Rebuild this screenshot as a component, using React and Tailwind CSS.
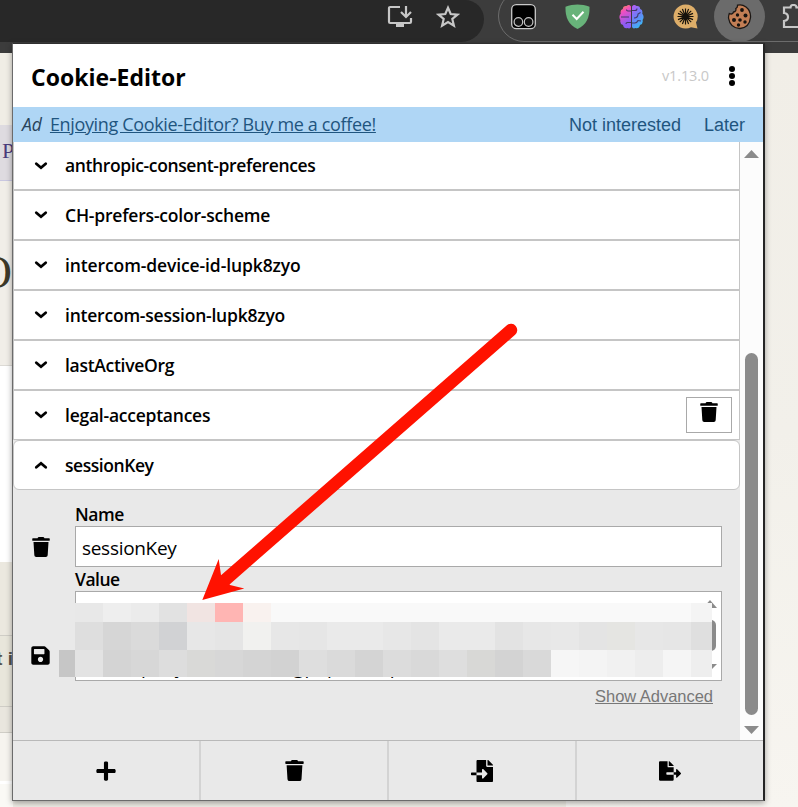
import React from 'react';
import { FaTrash, FaSave, FaPlus, FaFileImport, FaFileExport } from 'react-icons/fa';

const cookies = [
  { name: 'CH-prefers-color-scheme', tracking: 'tracking-[-0.2px]' },
  { name: 'intercom-device-id-lupk8zyo', tracking: 'tracking-[-0.11px]' },
  { name: 'intercom-session-lupk8zyo', tracking: 'tracking-[-0.22px]' },
  { name: 'lastActiveOrg', tracking: 'tracking-[-0.3px]' },
];

const maskTop = ['#e8e8e8', '#eeeeee', '#ebebeb', '#e2e2e2', '#f1e4e2', '#ffb5b3', '#f9f2ef', '#f9f9f9', '#f9f9f9', '#f9f9f9', '#f9f9f9', '#f9f9f9', '#f9f9f9', '#f9f9f9', '#f9f9f9', '#f9f9f9', '#f9f9f9', '#f9f9f9', '#f9f9f9', '#f9f9f9', '#f9f9f9', '#f9f9f9', '#f4f4f4'];
const maskMiddle = ['#dedede', '#d6d6d6', '#dadada', '#d1d2d4', '#e7e7e7', '#e5e5e5', '#f1f1ef', '#e7e7e7', '#e6e6e6', '#eaeaea', '#eaeaea', '#e7e7e7', '#e4e4e4', '#eaeaea', '#eaeaea', '#e3e3e3', '#e7e7e7', '#e8e8e8', '#e4e4e4', '#e5e5e2', '#e7e7e7', '#e6e6e6', '#dfdfdf'];
const maskBottom = ['#e3e3e3', '#d4d4d4', '#d7d7d7', '#dddddd', '#d9d9d7', '#d7d7d7', '#d4d4d4', '#d2d2d2', '#dedede', '#dadada', '#d4d4d4', '#dcdcdc', '#d9d9d9', '#dedede', '#d8d8d6', '#d3d3d3', '#d9d9d9', '#f6f6f6', '#f4f4f4', '#f1f1f1', '#ededed', '#f5f5f5', '#eeeeee'];

const MaskRow = ({ colors, height }) => (
  <div className="flex" style={{ height }}>
    {colors.map((color, i) => (
      <div key={i} className="w-7 shrink-0 last:w-[21px]" style={{ backgroundColor: color }} />
    ))}
  </div>
);

const Chevron = ({ up }) => (
  <svg className={up ? 'rotate-180' : ''} width="14" height="12" viewBox="0 0 14 12" fill="none" stroke="#000" strokeWidth="2.8">
    <path d="M2.300 3.700L7 7.700L11.700 3.700" strokeLinecap="round" />
  </svg>
);

const Toolbar = () => (
  <div className="flex h-[53px] bg-[#3c3c3c]">
    <div className="flex h-[42px] w-[484px] shrink-0 items-start gap-[23px] rounded-br-[24px] rounded-tr-[20px] bg-[#282828] pl-[387px] pt-[4px]">
      <svg width="26" height="25" viewBox="0 0 26 25" fill="none" stroke="#c7c7c7" strokeWidth="2.200">
        <path d="M13 3H3.200Q2 3 2 4.200V17.800Q2 19 3.200 19H22.800Q24 19 24 17.800V14" />
        <path d="M19 2V12.500M14 8L19 13L24 8" />
        <path d="M9 20H17V23H9Z" fill="#c7c7c7" stroke="none" />
      </svg>
      <svg width="24" height="25" viewBox="0 0 24 25" fill="none" stroke="#c7c7c7" strokeWidth="2.200">
        <path d="M12 3.800L14.700 10L21.500 10.600L16.300 15L17.900 21.600L12 18.100L6.100 21.600L7.700 15L2.500 10.600L9.300 10Z" />
      </svg>
    </div>
    <div className="-mt-[10px] ml-[14px] h-[52px] w-[320px] shrink-0 rounded-l-[26px] border border-[#6c6c6c] pl-3 pt-[13px]">
      <div className="flex items-start">
        <svg width="25" height="26" viewBox="0 0 25 26">
          <rect x="0.700" y="0.700" width="23.600" height="24" rx="4.500" fill="#000" stroke="#c9c9c9" strokeWidth="1.300" />
          <circle cx="7.400" cy="18" r="4.300" fill="#111" stroke="#c4c4c4" strokeWidth="1.200" />
          <circle cx="17.600" cy="18" r="4.300" fill="#111" stroke="#c4c4c4" strokeWidth="1.200" />
        </svg>
        <svg className="ml-[29px]" width="25" height="26" viewBox="0 0 25 26">
          <path d="M12.500 0.500C16 0.500 21 1.300 24.500 2.800C24.800 14 21.500 20.500 12.500 25C3.500 20.500 0.200 14 0.500 2.800C4 1.300 9 0.500 12.500 0.500Z" fill="#68b37a" />
          <path d="M7.500 10.800L11.700 15L18.500 7.800" fill="none" stroke="#fff" strokeWidth="2" />
        </svg>
        <svg className="ml-[29px]" width="25" height="26" viewBox="0 0 25 26">
          <defs>
            <linearGradient id="brainLeft" x1="0" y1="0" x2="0.300" y2="1">
              <stop offset="0.050" stopColor="#ff8a4c" />
              <stop offset="0.350" stopColor="#f04fc0" />
              <stop offset="0.900" stopColor="#8b5cf6" />
            </linearGradient>
            <linearGradient id="brainRight" x1="0" y1="0" x2="0.500" y2="1">
              <stop offset="0" stopColor="#b95cf5" />
              <stop offset="0.500" stopColor="#6f7cf8" />
              <stop offset="1" stopColor="#3db5f5" />
            </linearGradient>
          </defs>
          <path d="M12 2.500Q10 0 7.500 2Q4 1.500 3.800 5Q0.800 6 1.800 9.500Q-0.800 12.500 1.400 16Q0.600 20 4 21Q5 25 8.500 24Q11 25.200 12 23Z" fill="url(#brainLeft)" />
          <path d="M13 2.500Q15 0 17.500 2Q21 1.500 21.200 5Q24.200 6 23.200 9.500Q25.800 12.500 23.600 16Q24.400 20 21 21Q20 25 16.500 24Q14 25.200 13 23Z" fill="url(#brainRight)" />
          <path d="M12 7H9Q7.500 7 7.500 5.500M2 13H10M12 18.500H8.500Q7 18.500 7 20M13 6.500H16Q18 6.500 18 4.500M15 14Q19 14 19 10L21.500 8.500M13 19H16Q18 19 19 16.500L22 17" fill="none" stroke="#45386a" strokeWidth="1.100" />
        </svg>
        <svg className="ml-[29px]" width="25" height="26" viewBox="0 0 25 26">
          <path d="M12.500 0.500A12 12 0 0 1 23 18.500L24.500 24.500L18 23.200A12 12 0 1 1 12.500 0.500Z" fill="#deae69" />
          <path d="M12.500 4.500V20.500M4.500 12.500H20.500M6.800 6.800L18.200 18.200M18.200 6.800L6.800 18.200M9.400 5L15.600 20M15.600 5L9.400 20M5 9.400L20 15.600M5 15.600L20 9.400" stroke="#17130c" strokeWidth="1.200" />
        </svg>
        <div className="-mt-[13px] ml-[16px] flex h-[51px] w-[51px] items-center justify-center rounded-full bg-[#6b6b6b]">
          <svg width="25" height="26" viewBox="0 0 25 26">
            <path d="M10.500 1.200Q15 0 19 3Q24 7 23.500 13.500Q22.500 23.500 13 24.500Q3 24 1.500 14Q1.500 11.500 2.300 9.500Q5.500 11 6.500 8Q9.500 7.500 8.800 4.500Q10.800 3.500 10.500 1.200Z" fill="#c27e55" stroke="#1c1714" strokeWidth="1.300" />
            <g fill="#171310">
              <circle cx="15" cy="6" r="1.900" />
              <circle cx="10.500" cy="11" r="1.700" />
              <circle cx="18.500" cy="11.500" r="2" />
              <circle cx="7" cy="16" r="2" />
              <circle cx="13" cy="16" r="1.800" />
              <circle cx="18" cy="18" r="1.700" />
              <circle cx="11.500" cy="21" r="1.700" />
            </g>
          </svg>
        </div>
        <svg className="ml-[17px]" width="26" height="26" viewBox="0 0 26 26" fill="none" stroke="#c7c7c7" strokeWidth="2.200">
          <path d="M2 3.500H8.500Q8.500 1 11.500 1T14.500 3.500H22V23H2V17Q6 16.500 6 13T2 9Z" />
        </svg>
      </div>
    </div>
  </div>
);

// The part of the page that stays visible round the popup
const PageBehind = () => (
  <div className="flex h-[754px] overflow-hidden bg-[#f2efe8]">
    <div className="w-[13px] shrink-0 overflow-hidden font-['Liberation_Serif']">
      <div className="h-[72px] bg-[#f0ede5]" />
      <div className="h-[56px] overflow-hidden border-b border-[#c9c7e0] bg-[#dedbe0] pl-[2px] pt-[11px] text-[22px] leading-[30px] text-[#4a3c7c]">P</div>
      <div className="flex h-[185px] justify-end overflow-hidden border-b border-[#dcdad5] bg-[#f1eee8] pr-[1px] pt-[57px] text-[46px] leading-[70px] text-[#3d3929]">O</div>
      <div className="h-[196px] bg-white" />
      <div className="h-[74px] border-b border-[#cfcdc6] bg-[#ebe8df]" />
      <div className="flex h-[71px] items-start justify-end overflow-hidden whitespace-nowrap border-b border-[#cfcdc6] bg-[#e8e6db] pt-[10px] font-['Liberation_Sans'] text-[19px] font-bold leading-[26px] text-[#55524a]">t&nbsp;i</div>
      <div className="h-[26px] border-b border-[#cfcdc6] bg-[#e9e6de]" />
      <div className="h-[48px] bg-[#f6f4ef]" />
      <div className="h-[3px] bg-white" />
      <div className="h-[23px] bg-[#faf9f5]" />
    </div>
    <div className="w-[557px] shrink-0 border-r-4 border-[#f8f7f5] bg-[#efede6]" />
    <div className="grow bg-gradient-to-b from-[#f1eee7] via-[#f2f0ea] to-[#f7f5f0]" />
  </div>
);

const CookieRow = ({ name, tracking, className = '', children }) => (
  <div className={`flex h-[50px] items-center border border-[#c5c5c5] bg-white pl-[20px] pr-[7px] ${className}`}>
    <Chevron />
    <span className={`ml-[17px] grow text-[17.5px] font-semibold ${tracking}`}>{name}</span>
    {children}
  </div>
);

const SelectedCookie = () => (
  <div className="h-[250px] bg-[#e9e9e9]">
    <div className="flex">
      <div className="flex w-[62px] flex-col items-center pt-[47px]">
        <FaTrash className="-ml-1.5 h-5 w-[18px]" />
        <FaSave className="-ml-[7px] mt-[88px] h-[21px] w-[19px]" />
      </div>
      <div className="w-[647px] pt-[12px]">
        <label className="block h-[24px] text-[17.5px] font-semibold leading-[24px] tracking-[-0.4px]">Name</label>
        <div className="flex h-[41px] items-center border border-[#a9a9a9] bg-white px-[6px] pt-[3px] text-[19px] tracking-[-0.3px]">sessionKey</div>
        <label className="block h-[24px] text-[17.5px] font-semibold leading-[24px] tracking-[-0.5px]">Value</label>
        <div className="relative h-[90px] border border-[#a9a9a9] bg-white">
          <div className="flex h-full items-end overflow-hidden pl-[65px] text-[19px] leading-[25px]">
            <span>p</span>
            <span className="ml-[22px]">y</span>
            <span className="ml-[109px]">g</span>
            <span className="ml-[1px]">p</span>
            <span className="ml-[11px]">p</span>
            <span className="ml-[51px]">p</span>
          </div>
          <svg className="absolute right-[2px] top-[4px]" width="16" height="78" viewBox="0 0 16 78" fill="#8b8b8b">
            <path d="M0 12L7 4L14 12Z" />
            <rect x="2" y="24" width="11" height="31" rx="5" />
            <path d="M0 68H14L7 75Z" />
          </svg>
          <div className="absolute -left-px top-[11px] w-[637px]">
            <MaskRow colors={maskTop} height={19} />
            <MaskRow colors={maskMiddle} height={28} />
            <MaskRow colors={maskBottom} height={27} />
            <div className="absolute -left-4 bottom-0 h-[27px] w-4 bg-[#c6c6c6]" />
          </div>
        </div>
        <div className="mr-[9px] mt-[4px] text-right font-['Liberation_Sans'] text-[16.5px] leading-[22px] tracking-[-0.03px] text-[#777] underline">Show Advanced</div>
      </div>
    </div>
  </div>
);

const footerButtons = [
  { id: 'add', icon: <FaPlus className="h-[22px] w-[20px]" /> },
  { id: 'delete', icon: <FaTrash className="h-[21px] w-[19px]" /> },
  { id: 'import', icon: <FaFileImport className="h-[22px] w-[22px]" /> },
  { id: 'export', icon: <FaFileExport className="h-[22px] w-[22px]" /> },
];

const App = () => {
  return (
    <div className="relative h-[807px] w-[798px] overflow-hidden font-['Open_Sans',sans-serif] text-black">
      <Toolbar />
      <PageBehind />

      <div className="absolute left-[12px] top-[43px] flex h-[758px] w-[753px] flex-col border border-r-2 border-[#6b6b6b] border-r-[#252525] border-t-[#303030] bg-white shadow-[0_2px_6px_rgba(0,0,0,0.35)]">
        <header className="flex h-[63px] shrink-0 items-center pl-[18px] pr-[27px]">
          <h1 className="grow pt-[4px] text-[23px] font-bold tracking-[0.02px]">Cookie-Editor</h1>
          <span className="text-[14.5px] tracking-[-0.15px] text-[#c8c8c8]">v1.13.0</span>
          <svg className="ml-[19px]" width="8" height="22" viewBox="0 0 8 22">
            <circle cx="4" cy="4" r="3" />
            <circle cx="4" cy="11" r="3" />
            <circle cx="4" cy="18" r="3" />
          </svg>
        </header>

        <div className="flex h-[35px] shrink-0 items-center bg-[#afd6f5] pl-[9px] pr-[18px] text-[#1f557f]">
          <span className="text-[17.5px] italic text-[#28435a]">Ad</span>
          <a className="ml-[8px] grow text-[18px] tracking-[-0.35px] underline">Enjoying Cookie-Editor? Buy me a coffee!</a>
          <span className="pt-px font-['Liberation_Sans'] text-[18px]">Not interested</span>
          <span className="ml-[23px] pt-px font-['Liberation_Sans'] text-[18px]">Later</span>
        </div>

        <div className="flex h-[598px] shrink-0">
          <div className="w-[727px] bg-[#e9e9e9]">
            <CookieRow name="anthropic-consent-preferences" tracking="tracking-[-0.38px]" className="h-[48px]! border-t-0" />
            {cookies.map((cookie) => (
              <CookieRow key={cookie.name} name={cookie.name} tracking={cookie.tracking} />
            ))}
            <CookieRow name="legal-acceptances" tracking="tracking-[-0.24px]">
              <div className="flex h-[36px] w-[46px] justify-center border border-[#a9a9a9] pt-[4px]">
                <FaTrash className="h-5 w-[18px]" />
              </div>
            </CookieRow>
            <div className="flex h-[50px] items-center rounded-md border border-[#c5c5c5] bg-white pl-[20px]">
              <Chevron up />
              <span className="ml-[17px] text-[17.5px] font-semibold tracking-[-0.45px]">sessionKey</span>
            </div>
            <SelectedCookie />
          </div>
          <div className="flex w-[23px] flex-col items-center bg-[#fcfcfc] pt-[8px]">
            <svg width="15" height="8" viewBox="0 0 15 8" fill="#8b8b8b"><path d="M0 8L7.500 0L15 8Z" /></svg>
            <div className="mt-[195px] h-[362px] w-[13px] rounded-full bg-[#8b8b8b]" />
            <svg className="mt-[11px]" width="15" height="8" viewBox="0 0 15 8" fill="#8b8b8b"><path d="M0 0L7.500 8L15 0Z" /></svg>
          </div>
        </div>

        <footer className="grid grow grid-cols-[188px_188px_188px_1fr] border-t border-[#b9b9b9] bg-[#e9e9e9]">
          {footerButtons.map((button) => (
            <button key={button.id} className="flex items-center justify-center border-r-2 border-[#d3d3d3] last:border-r-0">
              {button.icon}
            </button>
          ))}
        </footer>
      </div>

      <svg className="absolute left-[200px] top-[320px]" width="320" height="284" viewBox="200 320 320 284">
        <path d="M511 330L224 581" stroke="#ff1200" strokeWidth="12.500" strokeLinecap="round" />
        <path d="M202.300 600L218.700 559L221 575L230 585L244.300 588.600Z" fill="#ff1200" />
      </svg>
    </div>
  );
};

export default App;
